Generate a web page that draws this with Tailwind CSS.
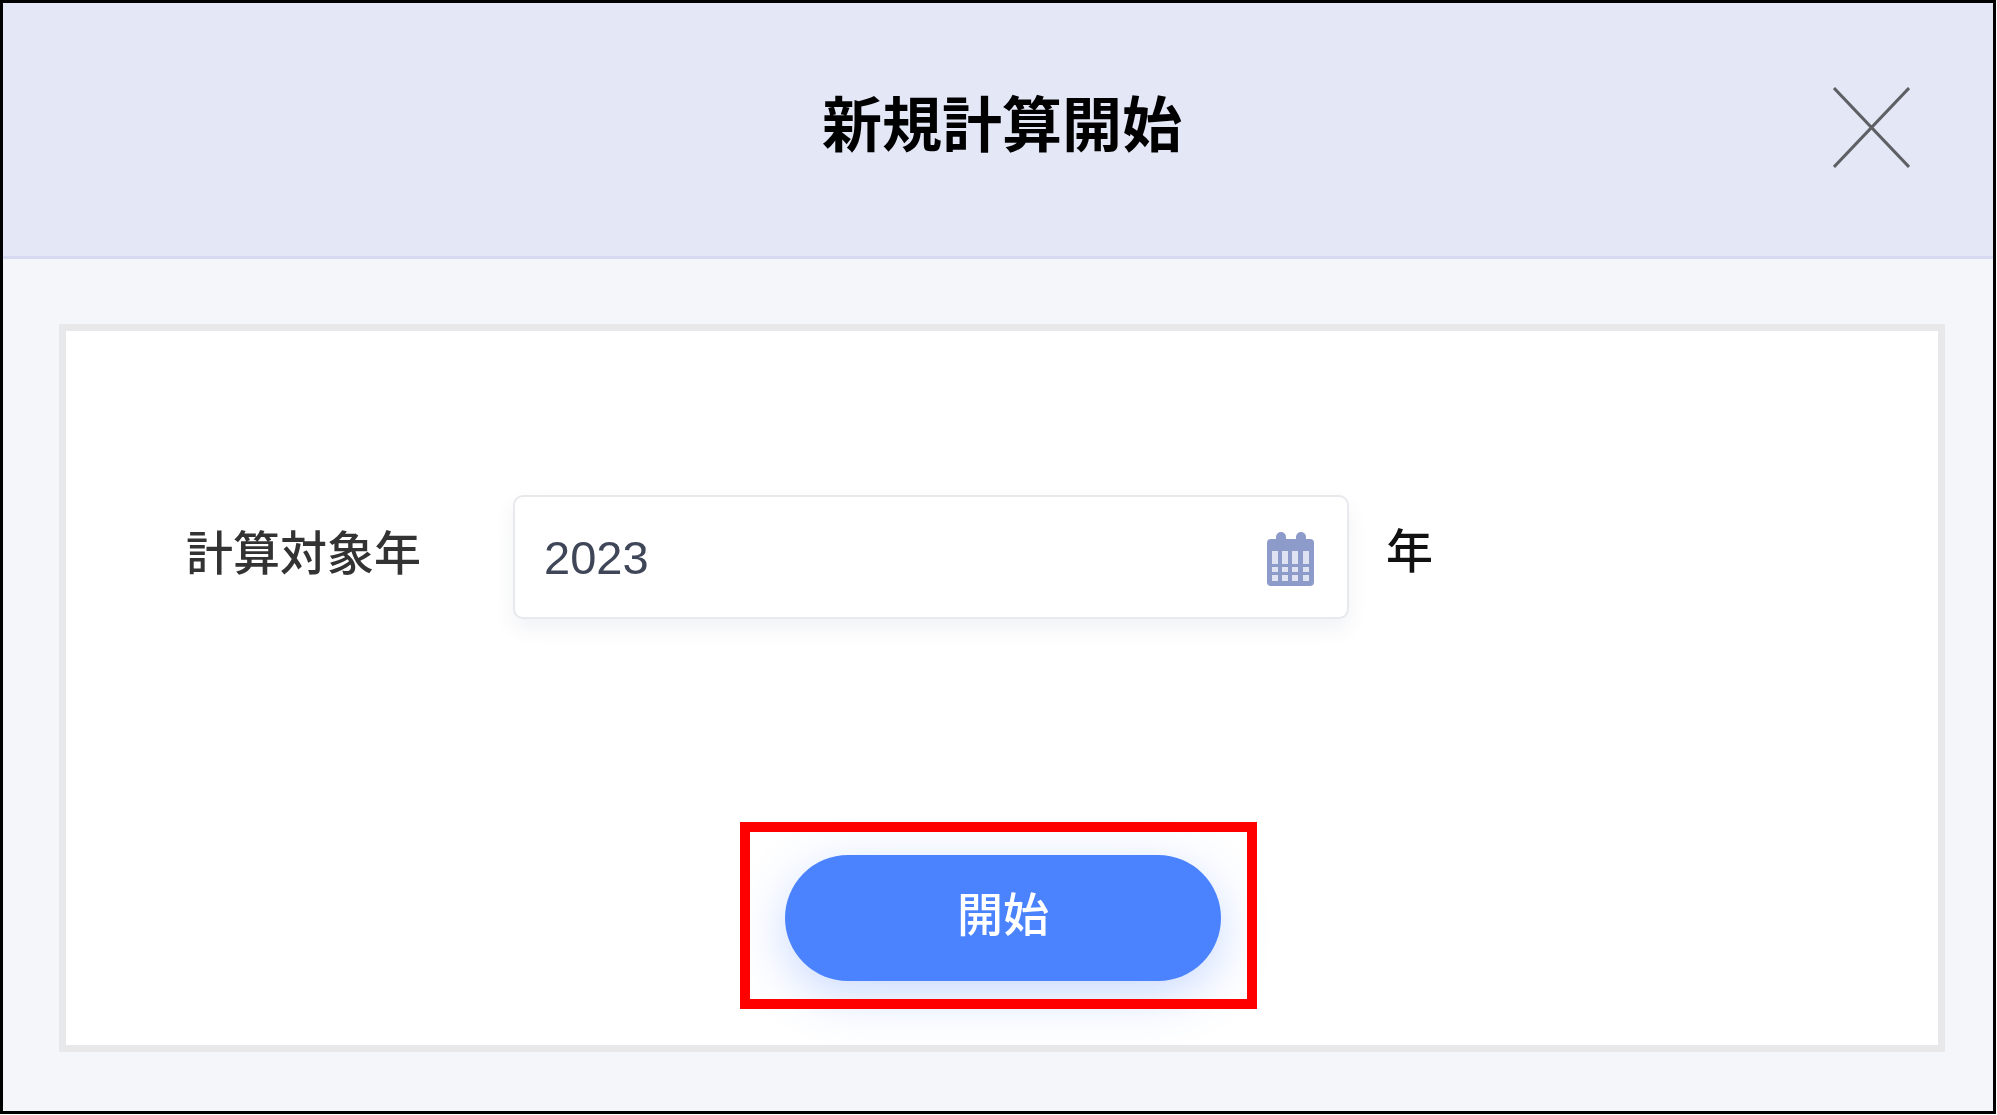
<!DOCTYPE html>
<html lang="ja">
<head>
    <meta charset="UTF-8">
    <meta name="viewport" content="width=device-width, initial-scale=1.0">
    <script src="https://cdn.jsdelivr.net/npm/@tailwindcss/browser@4"></script>
    <title>新規計算開始</title>
</head>
<body class="bg-white overflow-hidden">
    <div class="relative w-[1997px] h-[1115px] font-['Liberation_Sans','Noto_Sans_CJK_JP',sans-serif]">
        <div class="w-[1996px] h-[1114px] border-[3px] border-black bg-[#f4f6fa] flex flex-col">
            <!-- header -->
            <header class="relative h-[256px] shrink-0 bg-[#e4e8f6] border-b-[3px] border-[#d5daf1] flex items-center justify-center">
                <h1 class="text-[60px] leading-none font-bold text-black -mt-[6px] ml-[8px] blur-[0.6px]">新規計算開始</h1>
                <button class="absolute left-[1830px] top-[84px] blur-[0.5px]" aria-label="close">
                    <svg class="w-[77px] h-[81px]" viewBox="0 0 77 81" fill="none" stroke="#5f6065" stroke-width="3">
                        <path d="M1 1l75 79M76 1L1 80"/>
                    </svg>
                </button>
            </header>
            <!-- body -->
            <div class="flex-1 pt-[65px] pl-[56px] pr-[48px] pb-[59px]">
                <div class="h-full border-[7px] border-[#e8e8ea] bg-white pt-[164px]">
                    <div class="flex items-start pl-[120px]">
                        <label class="w-[327px] shrink-0 text-[47px] leading-none font-medium text-[#333] mt-[35px] blur-[0.6px]">計算対象年</label>
                        <div class="w-[836px] h-[124px] shrink-0 flex items-center justify-between pl-[29px] pr-[33px] bg-white border-2 border-[#e8e9ed] rounded-[10px] shadow-[0_10px_20px_rgba(60,70,110,0.07)]">
                            <span class="text-[47px] leading-none text-[#3e4658] mt-[1px] blur-[0.5px]">2023</span>
                            <svg class="w-[47px] h-[54px] mt-[3px] blur-[0.7px]" viewBox="0 0 47 54">
                                <rect x="0" y="7" width="47" height="47" rx="4" fill="#8c9bca"/>
                                <rect x="9" y="0" width="10" height="12" rx="5" fill="#8c9bca"/>
                                <rect x="29" y="0" width="10" height="12" rx="5" fill="#8c9bca"/>
                                <g fill="#dfe3f1">
                                    <rect x="5" y="19" width="6" height="13"/>
                                    <rect x="15" y="19" width="6" height="13"/>
                                    <rect x="25" y="19" width="6" height="13"/>
                                    <rect x="36" y="19" width="6" height="13"/>
                                    <rect x="5" y="35" width="6" height="5"/>
                                    <rect x="15" y="35" width="6" height="5"/>
                                    <rect x="25" y="35" width="6" height="5"/>
                                    <rect x="36" y="35" width="6" height="5"/>
                                    <rect x="5" y="43" width="6" height="6"/>
                                    <rect x="15" y="43" width="6" height="6"/>
                                    <rect x="25" y="43" width="6" height="6"/>
                                    <rect x="36" y="43" width="6" height="6"/>
                                </g>
                            </svg>
                        </div>
                        <span class="ml-[37px] text-[47px] leading-none font-medium text-[#111] mt-[33px] blur-[0.6px]">年</span>
                    </div>
                    <div class="flex justify-center mt-[236px] pl-[2px]">
                        <button class="w-[436px] h-[126px] rounded-full bg-[#4b83ff] text-white text-[46px] leading-none font-medium pb-[6px] shadow-[0_14px_50px_rgba(75,131,255,0.3)]"><span class="blur-[0.5px]">開始</span></button>
                    </div>
                </div>
            </div>
        </div>
        <!-- red annotation box -->
        <div class="absolute left-[740px] top-[822px] w-[517px] h-[187px] border-[10px] border-[#ff0000]"></div>
    </div>
</body>
</html>
